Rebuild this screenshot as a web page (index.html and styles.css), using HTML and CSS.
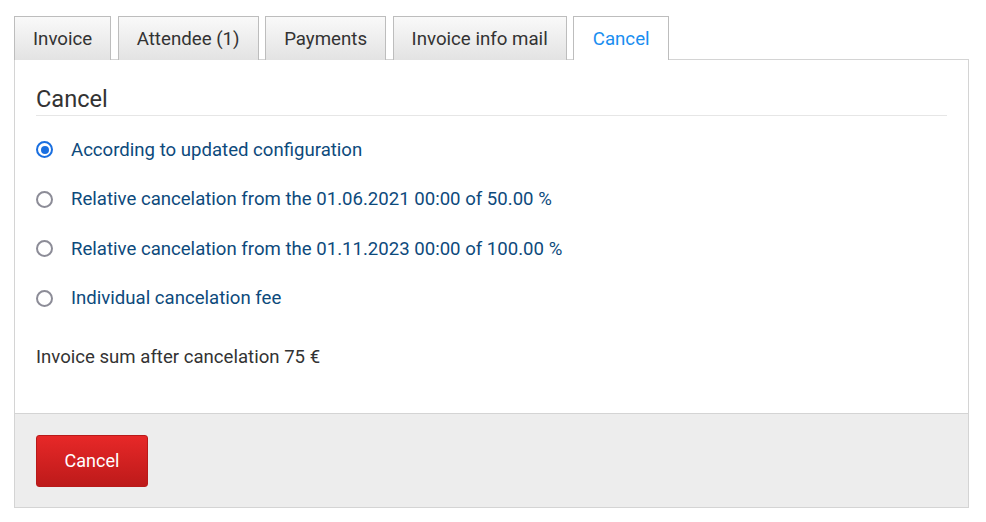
FILE: index.html
```html
<!DOCTYPE html>
<html>
<head>
<meta charset="utf-8">
<link rel="stylesheet" href="styles.css">
</head>
<body>
<div class="wrap">
  <ul class="tabs">
    <li class="tab">Invoice</li>
    <li class="tab">Attendee (1)</li>
    <li class="tab">Payments</li>
    <li class="tab">Invoice info mail</li>
    <li class="tab active">Cancel</li>
  </ul>
  <div class="panel">
    <div class="body">
      <h2 class="title">Cancel</h2>
      <div class="options">
        <label class="opt"><span class="radio checked"></span><span class="label">According to updated configuration</span></label>
        <label class="opt"><span class="radio"></span><span class="label">Relative cancelation from the 01.06.2021 00:00 of 50.00 %</span></label>
        <label class="opt"><span class="radio"></span><span class="label">Relative cancelation from the 01.11.2023 00:00 of 100.00 %</span></label>
        <label class="opt"><span class="radio"></span><span class="label">Individual cancelation fee</span></label>
      </div>
      <p class="sum">Invoice sum after cancelation 75 €</p>
    </div>
    <div class="footer">
      <button class="btn">Cancel</button>
    </div>
  </div>
</div>
</body>
</html>
```

FILE: styles.css
```css
* { box-sizing: border-box; }
html, body { margin: 0; padding: 0; background: #fff; }
body { font-family: Roboto, "Noto Sans", Arial, sans-serif; color: #333; }
.wrap { padding: 16px 17px 0 14px; width: 986px; }
.tabs { list-style: none; margin: 0; padding: 0; display: flex; gap: 6.5px; position: relative; z-index: 1; }
.tab {
  height: 44px;
  padding: 0 18px;
  font-size: 18.7px;
  line-height: 45px;
  color: #333;
  border: 1px solid #bdbdbd;
  border-bottom: none;
  background: linear-gradient(#f9f9f9, #e3e3e3);
  margin-bottom: -1px;
}
.tab.active { background: #fff; color: #1a8ef0; padding: 0 18.5px; }
.panel { border: 1px solid #d4d4d4; }
.body { padding: 0 21px 0 21px; }
.title {
  margin: 0;
  padding-top: 25px;
  font-size: 23.6px;
  font-weight: 400;
  line-height: 28px;
  color: #333;
  padding-bottom: 2px;
  border-bottom: 1px solid #e6e6e6;
}
.options { display: flex; flex-direction: column; padding-top: 20px; gap: 22.5px; }
.opt { display: flex; align-items: center; height: 27px; }
.radio {
  width: 17px; height: 17px;
  border: 2px solid #8c8c97;
  border-radius: 50%;
  margin-right: 18px;
  flex: none;
  position: relative;
}
.radio.checked { border-color: #1a6fe0; }
.radio.checked::after {
  content: "";
  position: absolute;
  left: 2.5px; top: 2.5px;
  width: 8px; height: 8px;
  border-radius: 50%;
  background: #1a6fe0;
}
.label { font-size: 18.6px; color: #0d4a7c; }
.sum { margin: 34px 0 45px; font-size: 18.6px; line-height: 22px; color: #333; }
.footer { background: #ededed; border-top: 1px solid #d4d4d4; padding: 21px 21px 20px; }
.btn {
  width: 112px; height: 52px;
  border: 1px solid #b81a1a;
  border-radius: 3px;
  background: linear-gradient(#e72828, #bd1a1a);
  color: #fff;
  font-family: Roboto, Arial, sans-serif;
  font-size: 18px;
  line-height: 48px;
  padding: 0;
}
```
